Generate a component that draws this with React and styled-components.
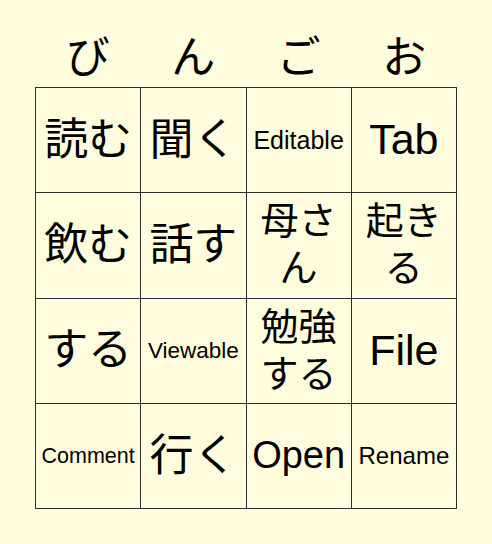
import React from "react";
import styled, { createGlobalStyle } from "styled-components";

const GlobalStyle = createGlobalStyle`
  html, body {
    margin: 0;
    padding: 0;
    background: #fffddd;
  }
  body {
    font-family: "Liberation Sans", "Noto Sans CJK JP", sans-serif;
    color: #000;
  }
`;

const header = ["び", "ん", "ご", "お"];

const cells = [
  { text: "読む", size: 44 },
  { text: "聞く", size: 44 },
  { text: "Editable", size: 25 },
  { text: "Tab", size: 43 },
  { text: "飲む", size: 44 },
  { text: "話す", size: 44 },
  { text: "母さん", size: 38 },
  { text: "起きる", size: 38 },
  { text: "する", size: 44 },
  { text: "Viewable", size: 22.5 },
  { text: "勉強する", size: 38 },
  { text: "File", size: 43 },
  { text: "Comment", size: 21.5 },
  { text: "行く", size: 44 },
  { text: "Open", size: 38 },
  { text: "Rename", size: 24 },
];

const App = () => {
  return (
    <Page>
      <GlobalStyle />
      <Card>
        <Header>
          {header.map((h) => (
            <Letter key={h}>{h}</Letter>
          ))}
        </Header>
        <Board>
          {cells.map((c) => (
            <Cell key={c.text} $size={c.size}>
              <span>{c.text}</span>
            </Cell>
          ))}
        </Board>
      </Card>
    </Page>
  );
};

export default App;

const Page = styled.div`
  width: 492px;
  height: 544px;
  display: flex;
  justify-content: center;
  background: #fffddd;
`;

const Card = styled.div`
  width: 422px;
  display: flex;
  flex-direction: column;
`;

const Header = styled.div`
  display: grid;
  grid-template-columns: repeat(4, 1fr);
  height: 87px;
  box-sizing: border-box;
  padding-top: 32px;
`;

const Letter = styled.div`
  text-align: center;
  font-size: 44px;
  line-height: 52px;
`;

const Board = styled.div`
  display: grid;
  grid-template-columns: repeat(4, 1fr);
  grid-auto-rows: 105.25px;
  border-top: 1px solid #2e2e2e;
  border-left: 1px solid #2e2e2e;
`;

const Cell = styled.div`
  box-sizing: border-box;
  border-right: 1px solid #2e2e2e;
  border-bottom: 1px solid #2e2e2e;
  display: flex;
  align-items: center;
  justify-content: center;
  padding: 0 2px;
  text-align: center;
  font-size: ${(p) => p.$size}px;
  line-height: 1.24;
  overflow: hidden;
`;
